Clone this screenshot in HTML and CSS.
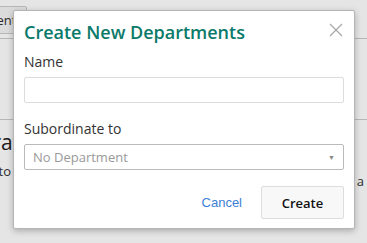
FILE: index.html
```html
<!DOCTYPE html>
<html lang="en">
<head>
    <meta charset="UTF-8">
    <title>Create New Departments</title>
    <link rel="stylesheet" href="styles.css">
</head>
<body>
    <!-- page behind the dialog -->
    <div class="page">
        <div class="toolbar">
            <button class="tool-btn">Add Department</button>
        </div>
        <div class="section">
            <h2 class="section-title">Integrations</h2>
            <p class="section-text">Connect to your other tools</p>
            <p class="section-note">a</p>
        </div>
    </div>

    <div class="backdrop"></div>

    <!-- Dialog -->
    <div class="modal">
        <div class="modal-header">
            <h1>Create New Departments</h1>
            <button class="close" aria-label="Close">
                <svg width="14" height="14" viewBox="0 0 14 14">
                    <path d="M1 1L13 13M13 1L1 13" stroke="#a8a8a8" stroke-width="1.2" fill="none"/>
                </svg>
            </button>
        </div>
        <form class="modal-body">
            <div class="form-group">
                <label for="dept-name">Name</label>
                <input type="text" id="dept-name">
            </div>
            <div class="form-group">
                <label for="dept-parent">Subordinate to</label>
                <div class="select" id="dept-parent">
                    <span>No Department</span>
                    <span class="caret">▼</span>
                </div>
            </div>
            <div class="actions">
                <a href="#" class="cancel">Cancel</a>
                <button type="button" class="btn">Create</button>
            </div>
        </form>
    </div>
</body>
</html>
```

FILE: styles.css
```css
* {
    margin: 0;
    padding: 0;
    box-sizing: border-box;
}

body {
    font-family: 'Open Sans', sans-serif;
    background: #fff;
    color: #333;
    width: 367px;
    height: 243px;
    overflow: hidden;
}

.toolbar {
    height: 39px;
    border-bottom: 1px solid #ccc;
    display: flex;
    align-items: center;
    padding-top: 2px;
}

.tool-btn {
    margin-left: -96px;
    height: 28px;
    padding: 0 10px;
    font-family: 'Open Sans', sans-serif;
    font-size: 13px;
    color: #333;
    background: #f4f4f4;
    border: 1px solid #ccc;
    border-radius: 2px;
}

.section {
    margin-top: 80px;
    border-top: 1px solid #ccc;
    padding-top: 8px;
    position: relative;
}

.section-title {
    font-size: 21px;
    font-weight: 400;
    color: #222;
    line-height: 28px;
    margin-left: -57px;
}

.section-text {
    font-size: 13px;
    color: #333;
    margin-top: 6px;
    margin-left: -55px;
}

.section-note {
    position: absolute;
    right: 3px;
    top: 52px;
    font-size: 13px;
    color: #333;
}

.backdrop {
    position: absolute;
    inset: 0;
    background: rgba(0, 0, 0, 0.1);
}

.modal {
    position: absolute;
    left: 13px;
    top: 10px;
    width: 342px;
    height: 219px;
    background: #fff;
    border: 1px solid #b5b5b5;
    border-radius: 2px;
    box-shadow: 0 2px 6px rgba(0, 0, 0, 0.25);
    padding: 0 10px;
}

.modal-header {
    display: flex;
    justify-content: space-between;
    align-items: center;
    height: 41px;
}

.modal-header h1 {
    font-size: 18px;
    font-weight: 600;
    color: #0b7a6a;
}

.close {
    background: none;
    border: none;
    margin-right: 1px;
    margin-top: -4px;
    display: flex;
}

.form-group label {
    display: block;
    font-size: 14px;
    line-height: 20px;
    color: #333;
    margin-bottom: 5px;
}

.form-group input {
    width: 100%;
    height: 26px;
    border: 1px solid #ddd;
    border-radius: 2px;
}

.form-group + .form-group {
    margin-top: 16px;
}

.select {
    display: flex;
    justify-content: space-between;
    align-items: center;
    height: 26px;
    border: 1px solid #bbb;
    border-radius: 2px;
    padding: 0 8px;
    font-size: 13px;
    color: #999;
}

.caret {
    font-size: 7px;
    color: #888;
}

.actions {
    display: flex;
    justify-content: flex-end;
    align-items: center;
    gap: 19px;
    margin-top: 16px;
}

.cancel {
    font-family: 'Liberation Sans', Arial, sans-serif;
    font-size: 13px;
    color: #3c7ed6;
    text-decoration: none;
}

.btn {
    width: 83px;
    height: 33px;
    background: #f8f8f8;
    border: 1px solid #ddd;
    border-radius: 2px;
    font-family: 'Open Sans', sans-serif;
    font-size: 13px;
    font-weight: 600;
    color: #111;
}
```
